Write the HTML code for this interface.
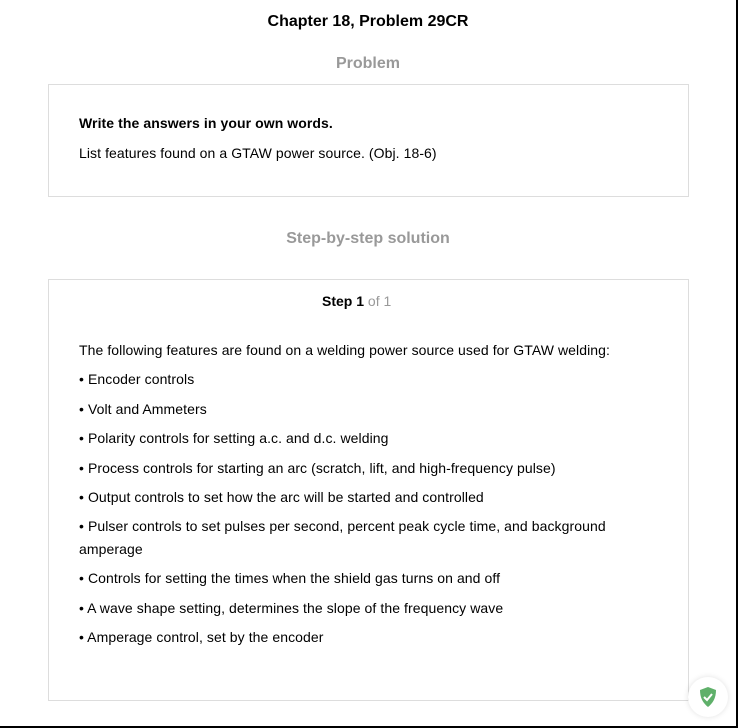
<!DOCTYPE html>
<html><head><style>
html,body{margin:0;padding:0;}
body{width:738px;height:728px;position:relative;overflow:hidden;background:#fff;font-family:"Liberation Sans",Arial,sans-serif;color:#000;}
.edge-r{position:absolute;left:736px;top:0;width:2px;height:728px;background:#000;}
.edge-b{position:absolute;left:0;top:726px;width:738px;height:2px;background:#000;}
.t{position:absolute;left:0;width:736px;text-align:center;font-weight:bold;}
.box{position:absolute;left:48px;width:639px;border:1px solid #ddd;}
.p{position:absolute;left:79px;font-size:14px;white-space:nowrap;letter-spacing:0.08px;}
</style></head><body>
<div class="t" style="top:13px;font-size:16px;">Chapter 18, Problem 29CR</div>
<div class="t" style="top:55px;font-size:16px;color:#999;">Problem</div>
<div class="box" style="top:84px;height:111px;"></div>
<div class="p" style="top:115px;font-weight:bold;">Write the answers in your own words.</div>
<div class="p" style="top:145px;">List features found on a GTAW power source. (Obj. 18-6)</div>
<div class="t" style="top:230px;font-size:16px;color:#999;">Step-by-step solution</div>
<div class="box" style="top:279px;height:420px;"></div>
<div style="position:absolute;left:322px;top:293px;font-size:14px;font-weight:bold;">Step 1 <span style="font-weight:normal;color:#999;">of 1</span></div>
<div class="p" style="top:342px;">The following features are found on a welding power source used for GTAW welding:</div>
<div class="p" style="top:371px;">• Encoder controls</div>
<div class="p" style="top:401px;">• Volt and Ammeters</div>
<div class="p" style="top:430px;">• Polarity controls for setting a.c. and d.c. welding</div>
<div class="p" style="top:460px;">• Process controls for starting an arc (scratch, lift, and high-frequency pulse)</div>
<div class="p" style="top:489px;">• Output controls to set how the arc will be started and controlled</div>
<div class="p" style="top:518px;">• Pulser controls to set pulses per second, percent peak cycle time, and background</div>
<div class="p" style="top:541px;">amperage</div>
<div class="p" style="top:570px;">• Controls for setting the times when the shield gas turns on and off</div>
<div class="p" style="top:600px;">• A wave shape setting, determines the slope of the frequency wave</div>
<div class="p" style="top:629px;">• Amperage control, set by the encoder</div>
<div style="position:absolute;left:688px;top:677px;width:40px;height:40px;border-radius:50%;background:#fff;box-shadow:0 0 6px rgba(0,0,0,0.12);"></div>
<svg style="position:absolute;left:697px;top:686px" width="22" height="22" viewBox="0 0 22 22">
<path d="M11 1 L19 4 C19 12 16 17 11 21 C6 17 3 12 3 4 Z" fill="#5fb06a"/>
<path d="M7 11 L10 14 L15 8" stroke="#fff" stroke-width="2" fill="none"/>
</svg>
<div class="edge-r"></div><div class="edge-b"></div>
</body></html>
